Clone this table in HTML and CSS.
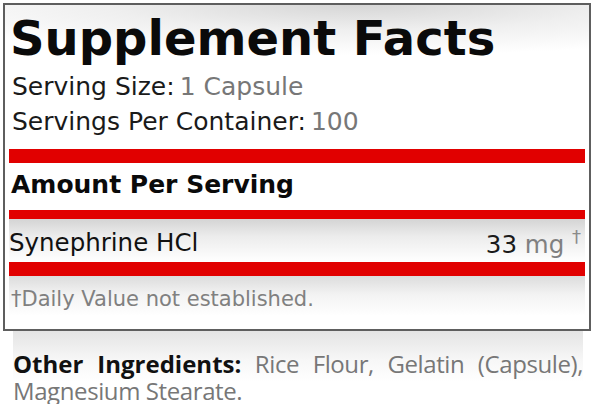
FILE: index.html
```html
<!DOCTYPE html>
<html lang="en">

<head>
    <meta charset="UTF-8">
    <meta name="viewport" content="width=device-width, initial-scale=1.0">
    <title>Supplement Facts</title>
    <link rel="stylesheet" href="styles.css">
</head>

<body>

    <div class="facts">
        <h1>Supplement Facts</h1>
        <p class="serving">Serving Size:<span class="value">1 Capsule</span></p>
        <p class="serving">Servings Per Container:<span class="value">100</span></p>

        <div class="red-bar thick first"></div>
        <h2>Amount Per Serving</h2>
        <div class="red-bar thin"></div>

        <div class="ingredient-row">
            <span class="name">Synephrine HCl</span>
            <span class="amount">33 <span class="unit">mg</span> <sup>†</sup></span>
        </div>
        <div class="red-bar thick"></div>

        <p class="footnote">†Daily Value not established.</p>
    </div>

    <p class="other">
        <strong>Other Ingredients:</strong> Rice Flour, Gelatin (Capsule), Magnesium Stearate.
    </p>

</body>

</html>
```

FILE: styles.css
```css
* {
    box-sizing: border-box;
    margin: 0;
    padding: 0;
}

body {
    background-color: #ffffff;
    font-family: "DejaVu Sans", Verdana, sans-serif;
    color: #111111;
}

.facts {
    margin: 3px 3px 0 3px;
    border: 2px solid #5e5e5e;
    padding: 0 4px;
    height: 328px;
    background: radial-gradient(ellipse 85% 50px at 60% 0, #d6d6d6 0%, #efefef 50%, #ffffff 100%);
}

.facts h1 {
    font-size: 48px;
    font-weight: bold;
    line-height: 48px;
    padding: 9px 0 7px 1px;
    color: #0a0a0a;
}

.serving {
    font-size: 25px;
    line-height: 35px;
    padding-left: 3px;
    color: #1a1a1a;
}

.serving .value {
    color: #777777;
    margin-left: 5px;
}

.red-bar {
    background-color: #e10000;
}

.red-bar.thick {
    height: 14px;
}

.red-bar.thin {
    height: 9px;
}

.red-bar.first {
    margin-top: 10px;
}

.facts h2 {
    font-size: 25px;
    font-weight: bold;
    line-height: 43px;
    padding: 0 0 4px 2px;
    color: #0a0a0a;
}

.ingredient-row {
    display: flex;
    justify-content: space-between;
    align-items: center;
    height: 43px;
    padding: 4px 4px 0 0;
    font-size: 24.5px;
    background: linear-gradient(to bottom, #d4d4d4 0%, #ececec 40%, #ffffff 100%);
}

.ingredient-row .amount {
    font-size: 24.5px;
    color: #1a1a1a;
}

.ingredient-row .unit {
    color: #808080;
}

.ingredient-row sup {
    color: #8a8a8a;
    font-size: 18px;
    vertical-align: 10px;
}

.footnote {
    font-size: 21px;
    color: #808080;
    line-height: 47px;
    padding-left: 2px;
    background: linear-gradient(to bottom, #dcdcdc 0%, #f3f3f3 40%, #ffffff 85%);
}

/* Other ingredients under the label */
.other {
    margin: 0 11px 0 13px;
    padding-top: 19px;
    font-family: "Open Sans", sans-serif;
    font-size: 24px;
    letter-spacing: -0.4px;
    line-height: 27px;
    color: #777777;
    text-align: justify;
    background: linear-gradient(to bottom, #e4e4e4 0%, #f7f7f7 40%, #ffffff 70%);
}

.other strong {
    color: #111111;
    font-weight: bold;
    letter-spacing: 0;
}
```
